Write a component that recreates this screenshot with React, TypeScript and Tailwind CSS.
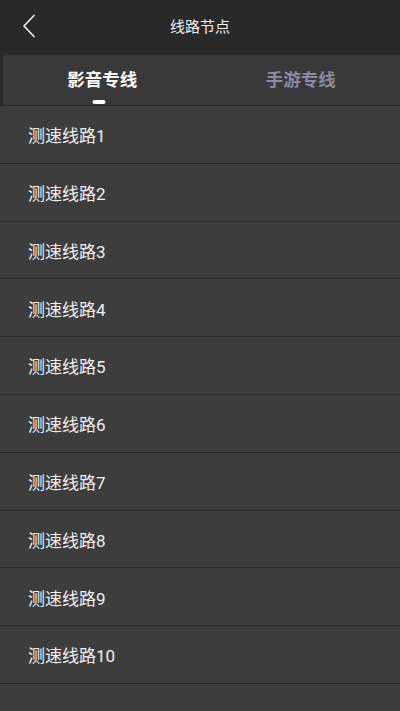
const lines = Array.from({ length: 10 }, (_, i) => `测速线路${i + 1}`);

const font = {
  fontFamily: 'Roboto, "Noto Sans CJK SC", "Noto Sans", sans-serif',
};

export default function App() {
  return (
    <div className="flex h-[711px] w-[400px] flex-col overflow-hidden bg-[#3d3d3d]" style={font}>
      {/* header */}
      <div className="relative flex h-[55px] shrink-0 items-center justify-center bg-[#292929]">
        <button className="absolute left-[18px] top-[10px] p-1 text-[#e8e8e8]">
          <svg width="14" height="24" viewBox="0 0 14 24" fill="none">
            <path d="M12 1.5 L2 12 L12 22.5" stroke="currentColor" strokeWidth="1.8" strokeLinecap="round" strokeLinejoin="round" />
          </svg>
        </button>
        <span className="text-[15px] text-[#f0f0f0]">线路节点</span>
      </div>

      {/* tabs */}
      <div className="flex h-[51px] shrink-0 border-b border-l-[3px] border-[#2a2a2a] bg-[#393939]">
        <div className="relative flex flex-1 items-center justify-center">
          <span className="text-[17.5px] font-bold text-white">影音专线</span>
          <span className="absolute bottom-[1px] left-1/2 ml-[-3px] h-[4px] w-[13px] -translate-x-1/2 rounded-full bg-white" />
        </div>
        <div className="flex flex-1 items-center justify-center">
          <span className="text-[17.5px] font-bold text-[#8b8aa3]">手游专线</span>
        </div>
      </div>

      {/* list */}
      <div className="flex flex-col">
        {lines.map((name) => (
          <div
            key={name}
            className="flex h-[57.8px] shrink-0 items-center border-b border-[#2a2a2a] pl-[28px] pt-[5px] text-[17px] text-[#f0f0f0]"
          >
            {name}
          </div>
        ))}
      </div>
    </div>
  );
}
